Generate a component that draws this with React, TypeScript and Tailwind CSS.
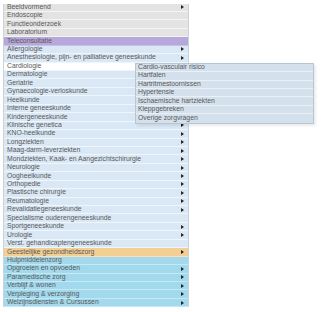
import React from "react";

type Row = { label: string; arrow?: boolean; tone: "gray" | "purple" | "blue" | "orange" | "cyan"; hi?: boolean };

const rows: Row[] = [
  { label: "Beeldvormend", arrow: true, tone: "gray" },
  { label: "Endoscopie", tone: "gray" },
  { label: "Functieonderzoek", tone: "gray" },
  { label: "Laboratorium", tone: "gray" },
  { label: "Teleconsultatie", tone: "purple" },
  { label: "Allergologie", arrow: true, tone: "blue" },
  { label: "Anesthesiologie, pijn- en palliatieve geneeskunde", arrow: true, tone: "blue" },
  { label: "Cardiologie", tone: "blue", hi: true },
  { label: "Dermatologie", tone: "blue" },
  { label: "Geriatrie", tone: "blue" },
  { label: "Gynaecologie-verloskunde", tone: "blue" },
  { label: "Heelkunde", tone: "blue" },
  { label: "Interne geneeskunde", tone: "blue" },
  { label: "Kindergeneeskunde", tone: "blue" },
  { label: "Klinische genetica", arrow: true, tone: "blue" },
  { label: "KNO-heelkunde", arrow: true, tone: "blue" },
  { label: "Longziekten", arrow: true, tone: "blue" },
  { label: "Maag-darm-leverziekten", arrow: true, tone: "blue" },
  { label: "Mondziekten, Kaak- en Aangezichtschirurgie", arrow: true, tone: "blue" },
  { label: "Neurologie", arrow: true, tone: "blue" },
  { label: "Oogheelkunde", arrow: true, tone: "blue" },
  { label: "Orthopedie", arrow: true, tone: "blue" },
  { label: "Plastische chirurgie", arrow: true, tone: "blue" },
  { label: "Reumatologie", arrow: true, tone: "blue" },
  { label: "Revalidatiegeneeskunde", arrow: true, tone: "blue" },
  { label: "Specialisme ouderengeneeskunde", tone: "blue" },
  { label: "Sportgeneeskunde", arrow: true, tone: "blue" },
  { label: "Urologie", arrow: true, tone: "blue" },
  { label: "Verst. gehandicaptengeneeskunde", tone: "blue" },
  { label: "Geestelijke gezondheidszorg", arrow: true, tone: "orange" },
  { label: "Hulpmiddelenzorg", tone: "cyan" },
  { label: "Opgroeien en opvoeden", arrow: true, tone: "cyan" },
  { label: "Paramedische zorg", arrow: true, tone: "cyan" },
  { label: "Verblijf & wonen", arrow: true, tone: "cyan" },
  { label: "Verpleging & verzorging", arrow: true, tone: "cyan" },
  { label: "Welzijnsdiensten & Cursussen", arrow: true, tone: "cyan" },
];

const sub = [
  "Cardio-vasculair risico",
  "Hartfalen",
  "Hartritmestoornissen",
  "Hypertensie",
  "Ischaemische hartziekten",
  "Kleppgebreken",
  "Overige zorgvragen",
];

const toneCls: Record<Row["tone"], string> = {
  gray: "bg-[#e3e3e3] border-[#f4f4f4]",
  purple: "bg-[#b7a8dc] border-[#cbbfe8]",
  blue: "bg-[#dae8f6] border-[#eef5fb]",
  orange: "bg-[#f3cf93] border-[#f8e2bd]",
  cyan: "bg-[#a2d9ec] border-[#c4e8f4]",
};

function Arrow() {
  return (
    <svg width="3" height="4" viewBox="0 0 3 4" className="shrink-0">
      <path d="M0 0 L3 2 L0 4 Z" fill="#222" />
    </svg>
  );
}

export default function App() {
  return (
    <div
      className="w-[323px] h-[312px] bg-white overflow-hidden pt-[3.5px] pl-[3px]"
      style={{ fontFamily: '"Liberation Sans", Arial, sans-serif' }}
    >
      <div className="relative w-[186px]">
        <div className="flex flex-col border-x border-[#c9d3dc]">
          {rows.map((r, i) => (
            <div
              key={i}
              className={`flex items-center justify-between h-[8.45px] border-b pl-[3px] pr-[4px] ${
                r.hi ? "bg-white border-[#eef5fb]" : toneCls[r.tone]
              }`}
            >
              <span className="text-[6.8px] leading-none text-[#585858] whitespace-nowrap">{r.label}</span>
              {r.arrow && <Arrow />}
            </div>
          ))}
        </div>
        <div className="absolute left-[132px] top-[59.2px] w-[179px] flex flex-col border border-[#b8c6d3] bg-[#d4e1ed] shadow-[2px_2px_2px_rgba(0,0,0,0.08)]">
          {sub.map((s, i) => (
            <div
              key={i}
              className="flex items-center h-[8.45px] border-b border-[#e9f0f6] last:border-b-0 pl-[2px] bg-[#d4e1ed]"
            >
              <span className="text-[6.8px] leading-none text-[#585858] whitespace-nowrap">{s}</span>
            </div>
          ))}
        </div>
      </div>
    </div>
  );
}
